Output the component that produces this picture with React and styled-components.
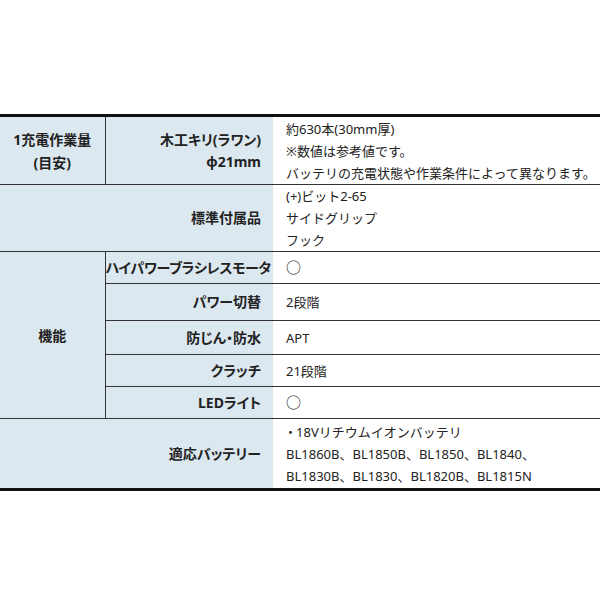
import React from 'react';
import styled, { createGlobalStyle } from 'styled-components';

const GlobalStyle = createGlobalStyle`
  html, body {
    margin: 0;
    padding: 0;
    background: #fff;
  }
  body {
    font-family: "Noto Sans", "Noto Sans CJK JP", sans-serif;
    color: #222;
  }
`;

const Page = styled.div`
  padding-top: 114px;
`;

const Spec = styled.table`
  width: 100%;
  border-collapse: collapse;
  table-layout: fixed;
  border-top: 3px solid #111;
  border-bottom: 3px solid #111;
`;

const Row = styled.tr`
  height: ${p => p.$h}px;
  td {
    border-top: 1px solid #333;
    padding: 0;
    vertical-align: middle;
    white-space: nowrap;
  }
`;

const Group = styled.td`
  background: #dce8f0;
  border-right: 1px solid #333;
  text-align: center;
  font-weight: bold;
  font-size: 14px;
  line-height: 23px;
  font-feature-settings: "palt";
`;

const Label = styled.td`
  background: #dce8f0;
  text-align: right;
  padding-right: 12px !important;
  font-weight: bold;
  font-size: 14px;
  line-height: 22px;
  font-feature-settings: "palt";
  letter-spacing: ${p => (p.$tight ? '-0.3px' : '0')};
`;

const Value = styled.td`
  padding-left: 13px !important;
  font-size: 13px;
  line-height: 22px;
`;

const Line = styled.div``;

const Mark = styled.span`
  font-size: 15px;
`;

const Bullet = styled.span`
  margin-left: -2px;
  margin-right: -1px;
`;

const features = [
  { label: 'ハイパワーブラシレスモータ', value: <Mark>○</Mark>, h: 32, tight: true },
  { label: 'パワー切替', value: '2段階', h: 37 },
  { label: '防じん・防水', value: 'APT', h: 34 },
  { label: 'クラッチ', value: '21段階', h: 32 },
  { label: 'LEDライト', value: <Mark>○</Mark>, h: 32 },
];

export default function App() {
  return (
    <Page>
      <GlobalStyle />
      <Spec>
        <colgroup>
          <col style={{ width: 105 }} />
          <col style={{ width: 168 }} />
          <col />
        </colgroup>
        <tbody>
          <Row $h={69}>
            <Group>
              <Line>1充電作業量</Line>
              <Line>(目安)</Line>
            </Group>
            <Label>
              <Line>木工キリ(ラワン)</Line>
              <Line>φ21mm</Line>
            </Label>
            <Value>
              <Line>約630本(30mm厚)</Line>
              <Line>※数値は参考値です。</Line>
              <Line>バッテリの充電状態や作業条件によって異なります。</Line>
            </Value>
          </Row>
          <Row $h={62}>
            <Label colSpan={2}>標準付属品</Label>
            <Value>
              <Line>(+)ビット2-65</Line>
              <Line>サイドグリップ</Line>
              <Line>フック</Line>
            </Value>
          </Row>
          {features.map((f, i) => (
            <Row $h={f.h} key={f.label}>
              {i === 0 && <Group rowSpan={features.length}>機能</Group>}
              <Label $tight={f.tight}>{f.label}</Label>
              <Value>{f.value}</Value>
            </Row>
          ))}
          <Row $h={71}>
            <Label colSpan={2}>適応バッテリー</Label>
            <Value>
              <Line><Bullet>・</Bullet>18Vリチウムイオンバッテリ</Line>
              <Line>BL1860B、BL1850B、BL1850、BL1840、</Line>
              <Line>BL1830B、BL1830、BL1820B、BL1815N</Line>
            </Value>
          </Row>
        </tbody>
      </Spec>
    </Page>
  );
}
